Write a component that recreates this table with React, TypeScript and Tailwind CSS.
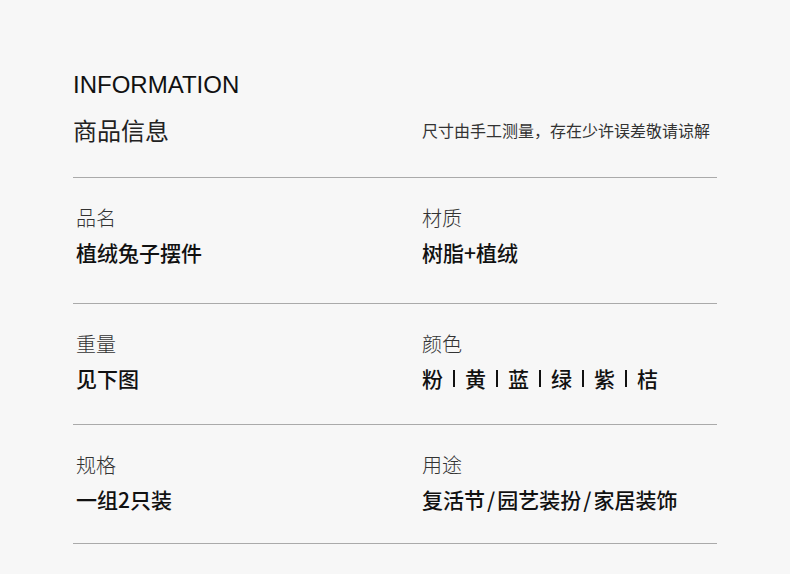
import React from 'react'

const rows = [
  {
    left: { label: '品名', value: '植绒兔子摆件' },
    right: { label: '材质', value: '树脂+植绒' },
    pb: 'pb-[39px]',
  },
  {
    left: { label: '重量', value: '见下图' },
    right: { label: '颜色', value: 'colors' },
    pb: 'pb-[34px]',
  },
  {
    left: { label: '规格', value: '一组2只装' },
    right: { label: '用途', value: '复活节/园艺装扮/家居装饰' },
    pb: 'pb-[32px]',
  },
]

const colors = ['粉', '黄', '蓝', '绿', '紫', '桔']

const Cell = ({ label, value }: { label: string; value: string }) => {
  return (
    <div className="flex flex-col gap-[10px]">
      <span className="text-[20px] leading-[24px] font-light text-[#333]">{label}</span>
      {value === 'colors' ? (
        <span className="text-[21px] leading-[24px] font-medium text-[#111] flex items-center">
          {colors.map((c, idx) => (
            <React.Fragment key={c}>
              <span>{c}</span>
              {idx < colors.length - 1 && (
                <span className="mx-[10px] w-[2px] h-[17px] bg-[#111]" />
              )}
            </React.Fragment>
          ))}
        </span>
      ) : (
        <span className="text-[21px] leading-[24px] font-medium text-[#111]">
          {value.split('/').map((part, idx, arr) => (
            <React.Fragment key={idx}>
              {part}
              {idx < arr.length - 1 && <span className="mx-[2px]">/</span>}
            </React.Fragment>
          ))}
        </span>
      )}
    </div>
  )
}

const App = () => {
  return (
    <div
      className="w-[790px] h-[574px] bg-[#f7f7f7] px-[73px] pt-[71px] overflow-hidden"
      style={{ fontFamily: '"Noto Sans CJK SC", "Noto Sans", sans-serif' }}
    >
      <p className="text-[24px] leading-[28px] text-[#111] font-['Liberation_Sans',sans-serif]">
        INFORMATION
      </p>
      <div className="mt-[15px] grid grid-cols-[349px_1fr] items-center pb-[31px] border-b border-[#aaaaaa]">
        <span className="text-[24px] leading-[32px] text-[#222]">商品信息</span>
        <span className="text-[16px] leading-[20px] text-[#333]">尺寸由手工测量，存在少许误差敬请谅解</span>
      </div>
      {rows.map((row, i) => (
        <div
          key={i}
          className={`grid grid-cols-[346px_1fr] pl-[3px] pt-[28px] ${row.pb} border-b border-[#aaaaaa]`}
        >
          <Cell label={row.left.label} value={row.left.value} />
          <Cell label={row.right.label} value={row.right.value} />
        </div>
      ))}
    </div>
  )
}

export default App
